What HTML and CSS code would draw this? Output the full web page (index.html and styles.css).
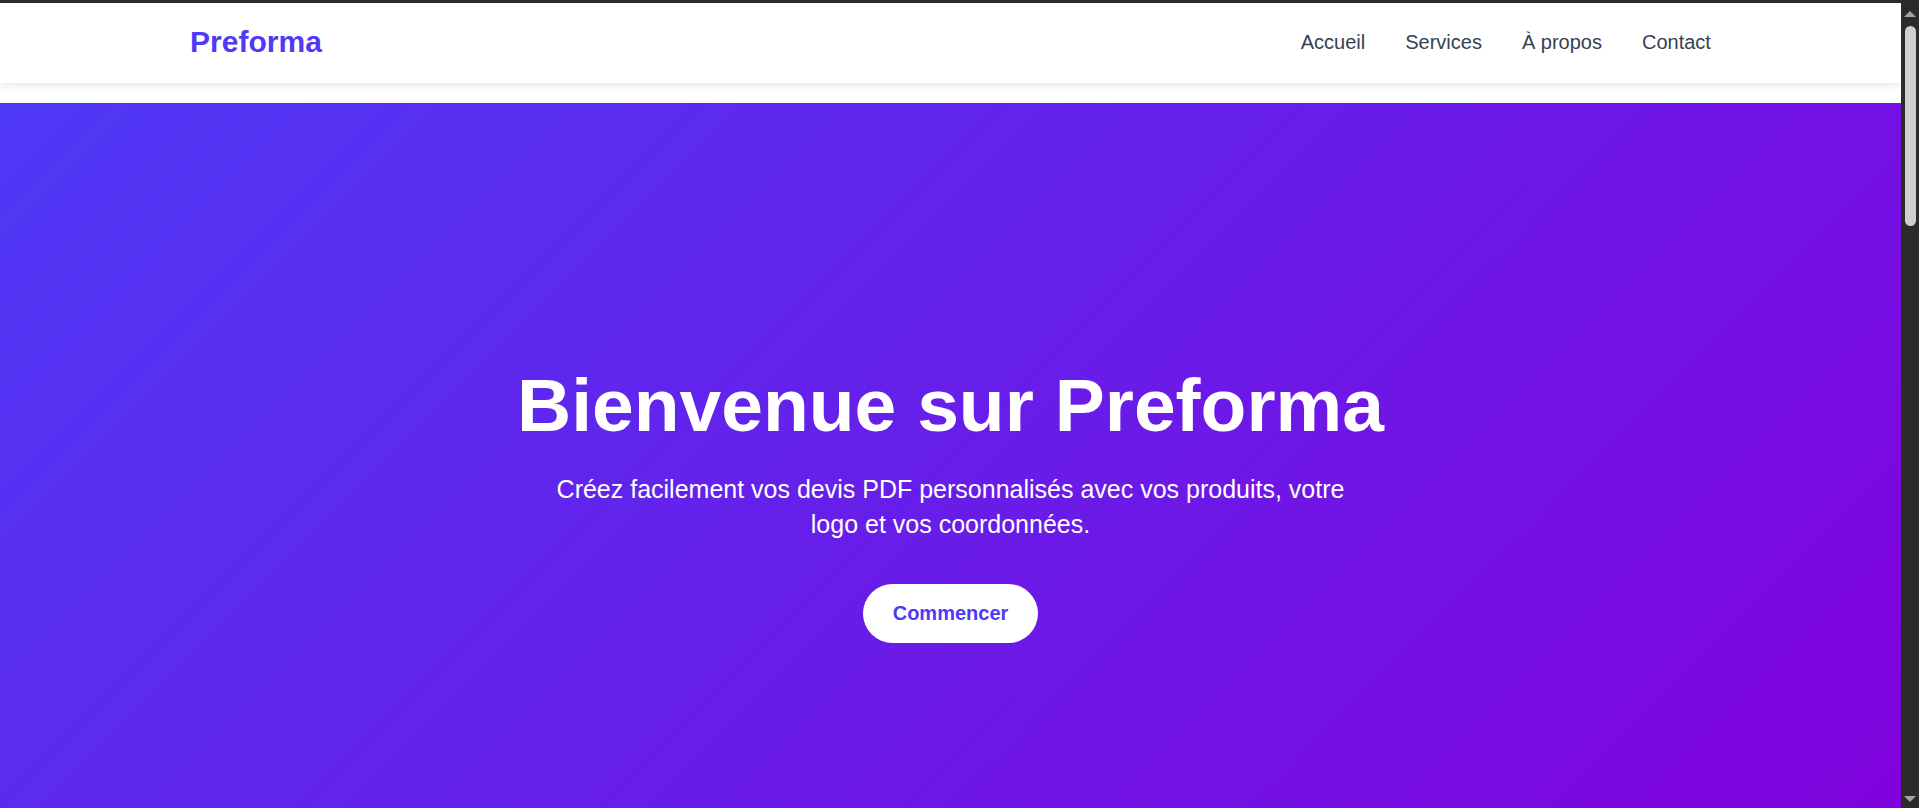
FILE: index.html
```html
<!DOCTYPE html>
<html lang="fr">
<head>
<meta charset="UTF-8">
<title>Preforma</title>
<link rel="stylesheet" href="styles.css">
</head>
<body>
<header class="site-header">
  <a class="logo" href="#">Preforma</a>
  <nav>
    <ul class="nav-links">
      <li><a href="#">Accueil</a></li>
      <li><a href="#services">Services</a></li>
      <li><a href="#about">À propos</a></li>
      <li><a href="#contact">Contact</a></li>
    </ul>
  </nav>
</header>
<main>
  <section class="hero">
    <h1 class="hero-title">Bienvenue sur Preforma</h1>
    <p class="hero-text">Créez facilement vos devis PDF personnalisés avec vos produits, votre logo et vos coordonnées.</p>
    <a class="btn" href="#">Commencer</a>
  </section>
</main>
<div class="scrollbar" aria-hidden="true">
  <span class="scroll-arrow up"></span>
  <span class="scroll-thumb"></span>
  <span class="scroll-arrow down"></span>
</div>
</body>
</html>
```

FILE: styles.css
```css
* {
  box-sizing: border-box;
}

html {
  background: #2b2b2b;
}

body {
  margin: 3px 18px 0 0;
  background: #ffffff;
  color: #364153;
  font-family: "Liberation Sans", Arial, sans-serif;
}

a {
  text-decoration: none;
}

.site-header {
  height: 80px;
  padding: 0 10% 2px;
  display: flex;
  align-items: center;
  justify-content: space-between;
  background: #ffffff;
  box-shadow: 0 2px 10px rgba(0, 0, 0, 0.1);
  position: relative;
  z-index: 2;
}

.logo {
  font-size: 30px;
  font-weight: 700;
  color: #4f39f6;
}

.nav-links {
  list-style: none;
  margin: 0;
  padding: 0;
  display: flex;
  gap: 40px;
}

.nav-links a {
  font-size: 20px;
  color: #364153;
}

main {
  margin-top: 20px;
}

.hero {
  min-height: 100vh;
  display: flex;
  flex-direction: column;
  align-items: center;
  justify-content: center;
  text-align: center;
  color: #ffffff;
  background: linear-gradient(135deg, #4f39f6 0%, #8200db 100%);
  padding: 0 20px 9px;
}

.hero-title {
  margin: 0 0 24px;
  font-size: 75px;
  font-weight: 700;
  line-height: normal;
}

.hero-text {
  margin: 0 0 42px;
  max-width: 800px;
  font-size: 25px;
  line-height: 35px;
}

.btn {
  display: inline-block;
  padding: 18px 30px;
  font-size: 20px;
  line-height: 23px;
  font-weight: 700;
  color: #4f39f6;
  background: #ffffff;
  border-radius: 50px;
}

.scrollbar {
  position: fixed;
  top: 3px;
  right: 0;
  bottom: 0;
  width: 18px;
  display: flex;
  flex-direction: column;
  align-items: center;
  padding: 8px 0 6px;
  background: #2b2b2b;
}

.scroll-arrow {
  width: 0;
  height: 0;
  border-left: 6px solid transparent;
  border-right: 6px solid transparent;
}

.scroll-arrow.up {
  border-bottom: 6px solid #a3a3a3;
}

.scroll-arrow.down {
  margin-top: auto;
  border-top: 6px solid #a3a3a3;
}

.scroll-thumb {
  margin-top: 9px;
  width: 11px;
  height: 200px;
  border-radius: 6px;
  background: #cfcfcf;
}
```
